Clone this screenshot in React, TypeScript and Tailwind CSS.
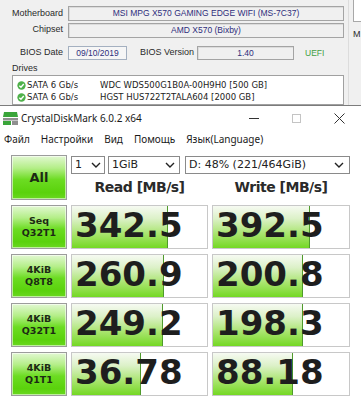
import React from 'react';

const rows = [
  { l1: 'Seq', l2: 'Q32T1', read: '342.5', rw: 96, write: '392.5', ww: 97 },
  { l1: '4KiB', l2: 'Q8T8', read: '260.9', rw: 92, write: '200.8', ww: 90 },
  { l1: '4KiB', l2: 'Q32T1', read: '249.2', rw: 91, write: '198.3', ww: 90 },
  { l1: '4KiB', l2: 'Q1T1', read: '36.78', rw: 69, write: '88.18', ww: 80 },
];

const btn =
  'border border-[#9c9c9c] bg-[linear-gradient(to_bottom,#e2f8d2_0%,#b4ee88_28%,#6cdc22_55%,#5ad20c_85%,#6ad820_100%)] shadow-[inset_0_0_0_1px_#ffffff90] flex flex-col items-center justify-center text-[#1c2a14] font-bold';

function Check() {
  return (
    <svg width="9" height="9" viewBox="0 0 10 10" className="shrink-0">
      <circle cx="5" cy="5" r="4.6" fill="#4fb14a" />
      <path d="M2.6 5.2 L4.4 6.9 L7.5 3.4" stroke="#fff" strokeWidth="1.5" fill="none" />
    </svg>
  );
}

function Chevron() {
  return (
    <svg width="10" height="6" viewBox="0 0 10 6" className="shrink-0">
      <path d="M1 1 L5 5 L9 1" stroke="#222" strokeWidth="1.4" fill="none" />
    </svg>
  );
}

function Field({ w, children }: { w: string; children: React.ReactNode }) {
  return (
    <div
      className={`${w} h-full border border-[#a4a4a4] bg-[#f0f0f0] shadow-[inset_1px_1px_0_#dcdcdc] flex items-center justify-center text-[#2e2e7c] text-[8.5px]`}
    >
      {children}
    </div>
  );
}

function Meter({ value, fill }: { value: string; fill: number }) {
  return (
    <div className="relative h-full border border-[#c8c8c8] bg-white overflow-hidden">
      <div
        className="absolute left-0 top-0 bottom-0 border-r border-[#4f9a2c] bg-[linear-gradient(to_bottom,#f6faf2_0%,#dcf1c8_30%,#a6e46a_68%,#74d824_100%)]"
        style={{ width: fill }}
      />
      <div className="relative h-full flex items-center pl-[3px] pb-[4px] text-[34px] leading-none font-bold text-[#1e1e1e] font-['DejaVu_Sans',sans-serif]">
        {value}
      </div>
    </div>
  );
}

export default function App() {
  return (
    <div className="w-[361px] h-[400px] overflow-hidden bg-[#f0f0f0] flex flex-col font-['Liberation_Sans',sans-serif]">
      {/* CPU-Z mainboard panel behind */}
      <div className="h-[105px] flex shrink-0 overflow-hidden">
        <div className="w-[348px] flex flex-col pt-[6px] text-[9px] text-[#2a2a2a]">
          <div className="h-[16px] flex items-center gap-[5px]">
            <div className="w-[63px] text-right">Motherboard</div>
            <Field w="w-[276px]">MSI MPG X570 GAMING EDGE WIFI (MS-7C37)</Field>
          </div>
          <div className="h-[16px] mt-[2px] flex items-center gap-[5px]">
            <div className="w-[63px] text-right">Chipset</div>
            <Field w="w-[276px]">AMD X570 (Bixby)</Field>
          </div>
          <div className="h-[16px] mt-[8px] flex items-center">
            <div className="w-[63px] text-right">BIOS Date</div>
            <div className="ml-[5px] w-[59px] h-full border border-[#a4b0c0] bg-[#f6f6f6] flex items-center justify-center text-[#2e2e7c] text-[8.5px]">
              09/10/2019
            </div>
            <div className="ml-[13px] w-[57px]">BIOS Version</div>
            <Field w="w-[97px]">1.40</Field>
            <div className="ml-[11px] text-[#43a043] text-[8.5px]">UEFI</div>
          </div>
          <div className="pl-[12px] mt-[2px] h-[13px] flex items-center">Drives</div>
          <div className="ml-[12px] w-[332px] h-[40px] border border-[#a0a0a0] bg-white pt-[3px] pl-[4px] text-[8.5px] text-[#222] font-['DejaVu_Sans',sans-serif]">
            <div className="h-[12px] flex items-center">
              <Check />
              <span className="ml-[1px] w-[73px]">SATA 6 Gb/s</span>
              <span>WDC WDS500G1B0A-00H9H0 [500 GB]</span>
            </div>
            <div className="h-[12px] flex items-center">
              <Check />
              <span className="ml-[1px] w-[73px]">SATA 6 Gb/s</span>
              <span>HGST HUS722T2TALA604 [2000 GB]</span>
            </div>
          </div>
        </div>
        <div className="flex-1 border-l border-[#dcdcdc] pl-[4px]">
          <div className="h-[22px] border-l border-b border-[#a8a8a8] bg-white" />
          <div className="mt-[6px] text-[9px] text-[#2a2a2a]">M</div>
        </div>
      </div>

      {/* CrystalDiskMark window */}
      <div className="flex-1 flex flex-col bg-white border-t border-[#7c7c7c] font-['Noto_Sans',sans-serif]">
        <div className="h-[24px] flex items-center shrink-0">
          <svg width="15" height="13" viewBox="0 0 15 13" className="ml-[3px]">
            <path d="M1 0 H14 L15 5 H0 Z" fill="#3aa53a" />
            <rect x="0" y="6" width="15" height="2.5" fill="#8f8f8f" />
            <rect x="0" y="9" width="8" height="4" fill="#3aa53a" />
            <rect x="9" y="9" width="6" height="4" fill="#8f8f8f" />
          </svg>
          <span className="ml-[3px] text-[10px] text-[#1a1a1a]">CrystalDiskMark 6.0.2 x64</span>
          <div className="ml-auto flex h-full">
            <div className="w-[43px] flex items-center justify-center">
              <div className="w-[10px] h-px bg-[#333]" />
            </div>
            <div className="w-[43px] flex items-center justify-center">
              <div className="w-[9px] h-[9px] border border-[#c4c4c4]" />
            </div>
            <div className="w-[43px] flex items-center justify-center">
              <svg width="11" height="11" viewBox="0 0 11 11">
                <path d="M0.5 0.5 L10.5 10.5 M10.5 0.5 L0.5 10.5" stroke="#333" strokeWidth="1" />
              </svg>
            </div>
          </div>
        </div>
        <div className="h-[18px] flex items-center gap-[11px] pl-[4px] text-[10px] text-[#1a1a1a] shrink-0">
          <span>Файл</span>
          <span>Настройки</span>
          <span>Вид</span>
          <span>Помощь</span>
          <span>Язык(Language)</span>
        </div>

        <div className="pt-[7px] pl-[11px] grid grid-cols-[56px_137px_138px] gap-x-[4px] gap-y-[5px] grid-rows-[45px_44px_44px_44px_44px] font-['DejaVu_Sans',sans-serif]">
          <div className={`${btn} text-[13px]`}>All</div>
          <div className="col-span-2 -mb-[1px] flex flex-col">
            <div className="mt-[1px] h-[18px] flex text-[11px] text-[#222]">
              <div className="w-[34px] border border-[#8a8a8a] bg-white flex items-center pl-[3px] pr-[3px] justify-between">
                <span>1</span>
                <Chevron />
              </div>
              <div className="ml-[3px] w-[72px] border border-[#8a8a8a] bg-white flex items-center pl-[3px] pr-[4px] justify-between">
                <span>1GiB</span>
                <Chevron />
              </div>
              <div className="ml-[5px] w-[165px] border border-[#8a8a8a] bg-white flex items-center pl-[3px] pr-[5px] justify-between">
                <span>D: 48% (221/464GiB)</span>
                <Chevron />
              </div>
            </div>
            <div className="flex-1 flex items-center text-[14px] tracking-[-0.5px] font-bold text-[#2a2a2a]">
              <div className="w-[137px] text-center">Read [MB/s]</div>
              <div className="ml-[4px] w-[138px] text-center">Write [MB/s]</div>
            </div>
          </div>
          {rows.map((r, i) => (
            <React.Fragment key={i}>
              <div className={`${btn} text-[9.5px] leading-[12px]`}>
                <span>{r.l1}</span>
                <span>{r.l2}</span>
              </div>
              <Meter value={r.read} fill={r.rw} />
              <Meter value={r.write} fill={r.ww} />
            </React.Fragment>
          ))}
        </div>
      </div>
    </div>
  );
}
